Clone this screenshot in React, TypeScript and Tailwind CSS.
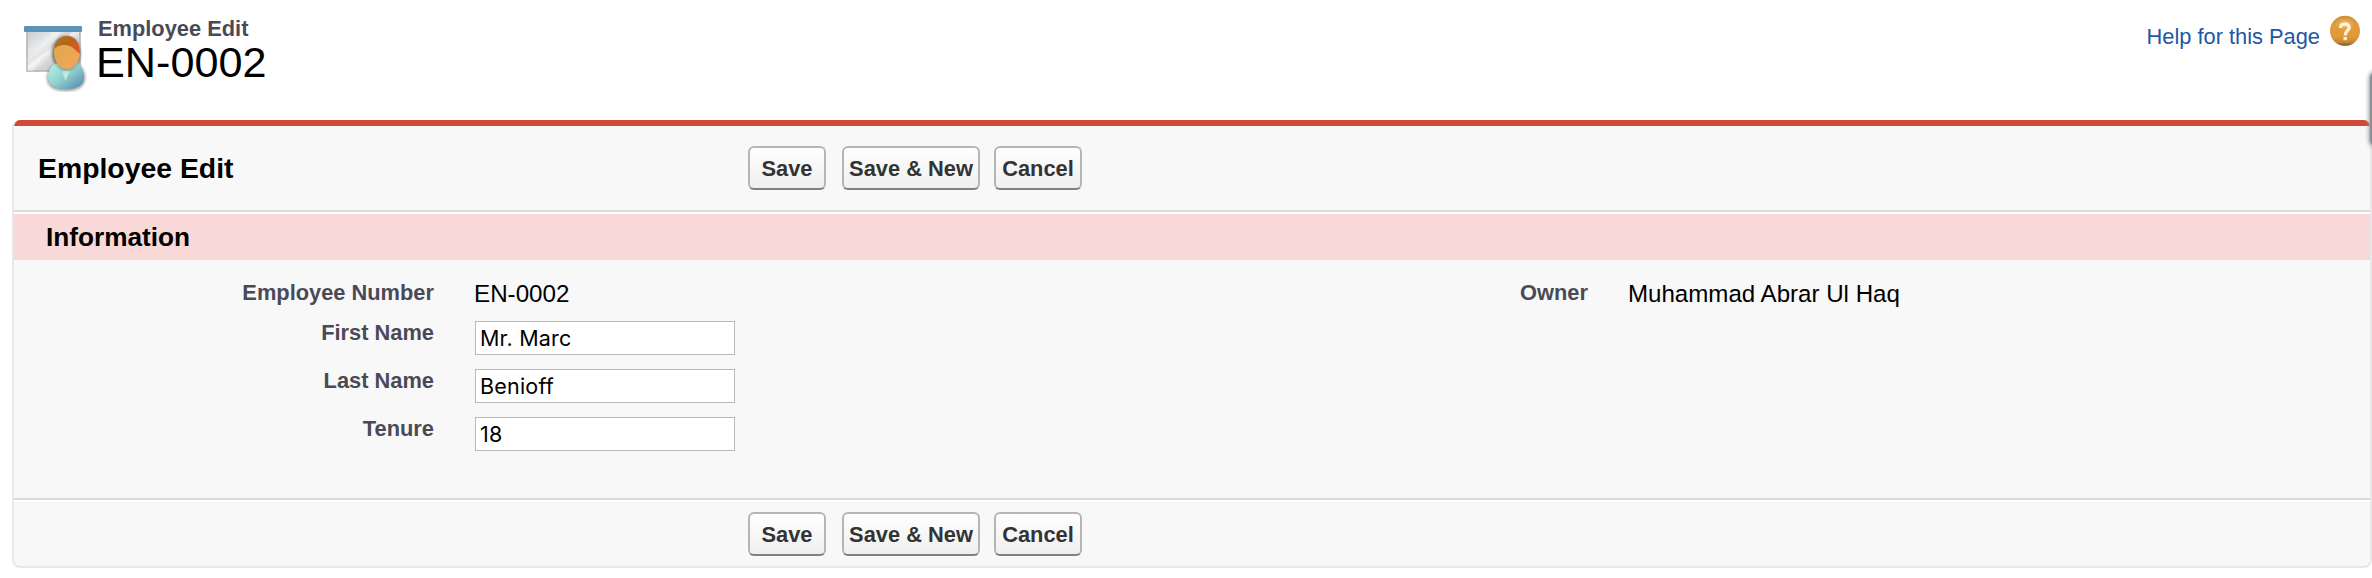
import type { ReactNode } from "react";

function EmployeeIcon() {
  return (
    <svg width="64" height="68" viewBox="0 0 64 68" className="mt-6 ml-[23px] shrink-0">
      <defs>
        <linearGradient id="board" x1="0" y1="0" x2="1" y2="1">
          <stop offset="0" stopColor="#c9cacc" />
          <stop offset="0.3" stopColor="#e9eaeb" />
          <stop offset="0.42" stopColor="#d3d4d6" />
          <stop offset="0.46" stopColor="#f0f0f1" />
          <stop offset="0.6" stopColor="#d2d3d5" />
          <stop offset="1" stopColor="#c4c5c7" />
        </linearGradient>
        <linearGradient id="shirt" x1="0" y1="0" x2="1" y2="1">
          <stop offset="0.1" stopColor="#b4f0e0" />
          <stop offset="0.5" stopColor="#8fcfce" />
          <stop offset="1" stopColor="#4f84ac" />
        </linearGradient>
        <linearGradient id="hair" x1="0" y1="0" x2="1" y2="0.7">
          <stop offset="0" stopColor="#b07a22" />
          <stop offset="0.5" stopColor="#b4651c" />
          <stop offset="1" stopColor="#de5422" />
        </linearGradient>
        <linearGradient id="face" x1="0" y1="0" x2="1" y2="1">
          <stop offset="0" stopColor="#e0a64a" />
          <stop offset="1" stopColor="#f0a75c" />
        </linearGradient>
        <filter id="soft" x="-20%" y="-20%" width="140%" height="140%">
          <feGaussianBlur stdDeviation="1.4" />
        </filter>
      </defs>
      <rect x="4" y="7" width="53" height="40" fill="url(#board)" stroke="#b4b5b7" strokeWidth="1.6" />
      <path d="M4.500 35 30 8H38L10 47H4.500Z" fill="#fff" opacity="0.35" />
      <rect x="1" y="2" width="58" height="6" rx="1" fill="#5c94b9" />
      <g filter="url(#soft)" opacity="0.5">
        <ellipse cx="43" cy="29" rx="14" ry="16.500" fill="#333" />
        <path d="M24 54C24 45 31 40 36 40H51C58 40 62 47 62 54C62 63 54 67 43 67S24 63 24 54Z" fill="#333" />
      </g>
      <path d="M25 53C25 45 30 40 35 39L52 38C58 39 61 46 61 54C61 61 54 65 43 65S25 61 25 53Z" fill="url(#shirt)" />
      <path d="M39 47 42.500 57 47 47Z" fill="#d4f1ef" opacity="0.7" />
      <ellipse cx="43.500" cy="29.500" rx="13.500" ry="17" fill="#46565a" opacity="0.45" filter="url(#soft)" />
      <ellipse cx="44" cy="28.500" rx="13" ry="16.500" fill="url(#face)" />
      <path d="M31.200 25C32 17 36.500 12 44 12S57 18 57 30C54 28 52 25 48 22.500C44 20.500 36 19.500 31.200 25Z" fill="url(#hair)" />
    </svg>
  );
}

function HelpIcon() {
  return (
    <svg width="30" height="32" viewBox="0 0 30 32" className="ml-[10px] mt-[15px] shrink-0">
      <defs>
        <linearGradient id="orb" x1="0" y1="0" x2="0" y2="1">
          <stop offset="0" stopColor="#cf8f35" />
          <stop offset="0.35" stopColor="#e19a3b" />
          <stop offset="0.7" stopColor="#e29a37" />
          <stop offset="0.88" stopColor="#c3873a" />
          <stop offset="1" stopColor="#7d5524" />
        </linearGradient>
        <radialGradient id="glow" cx="0.5" cy="0.5" r="0.5">
          <stop offset="0" stopColor="#f8d294" stopOpacity="0.9" />
          <stop offset="1" stopColor="#f0b860" stopOpacity="0" />
        </radialGradient>
      </defs>
      <ellipse cx="15" cy="16.500" rx="14" ry="14.500" fill="#6b4b22" opacity="0.35" />
      <circle cx="15" cy="15.800" r="15" fill="url(#orb)" />
      <ellipse cx="15" cy="9" rx="11" ry="7" fill="url(#glow)" />
      <path
        d="M10.500 13C10.500 10.500 12.200 9.200 15 9.200S19.200 10.800 19.200 12.800C19.200 15.800 15.200 15.500 15.200 20.500"
        fill="none"
        stroke="#fdf1de"
        strokeWidth="3.200"
      />
      <rect x="13.500" y="22" width="3.400" height="3.200" fill="#fdf1de" />
    </svg>
  );
}

function ActionButton({ className, children }: { className: string; children: ReactNode }) {
  return (
    <button
      type="button"
      className={`${className} h-11 shrink-0 whitespace-nowrap rounded-[6px] border-2 border-[#b5b5b5] border-b-[#7f7f7f] bg-linear-to-b from-white to-[#efefef] p-0 text-center text-[21.84px] leading-[40px] font-bold text-[#333333]`}
    >
      <span className="block pt-px leading-[40px]">{children}</span>
    </button>
  );
}

function Actions() {
  return (
    <div className="flex">
      <ActionButton className="w-[78px]">Save</ActionButton>
      <ActionButton className="ml-4 w-[138px]">Save &amp; New</ActionButton>
      <ActionButton className="ml-[14px] w-[88px]">Cancel</ActionButton>
    </div>
  );
}

function Label({ className, children }: { className: string; children: ReactNode }) {
  return (
    <div className={`${className} shrink-0 text-right text-[21.84px] leading-[26px] font-bold text-[#4a4a56]`}>
      {children}
    </div>
  );
}

function InputRow({ label, value }: { label: string; value: string }) {
  return (
    <div className="flex h-12">
      <Label className="w-[420px] pt-1">{label}</Label>
      <input
        defaultValue={value}
        className="mt-[5px] ml-[41px] h-[34px] w-[260px] border border-[#b9b9b9] bg-white px-1 py-0 font-['Inter',sans-serif] text-[21.5px] leading-[32px] tracking-[0.2px] text-black outline-none"
      />
    </div>
  );
}

export default function App() {
  return (
    <div className="relative h-[578px] w-[2372px] overflow-hidden bg-white font-['Liberation_Sans',Arial,sans-serif] text-black">
      <header className="flex h-[120px]">
        <EmployeeIcon />
        <div className="ml-[10px] pt-4">
          <p className="pl-px text-[21.84px] leading-[26px] font-bold text-[#4a4a56]">Employee Edit</p>
          <h1 className="mt-[-3px] -ml-px text-[43.2px] leading-[46px]">EN-0002</h1>
        </div>
        <div className="mr-3 ml-auto flex">
          <a href="#" className="pt-6 text-[21.84px] leading-[26px] text-[#1e57a4]">
            Help for this Page
          </a>
          <HelpIcon />
        </div>
      </header>

      <main className="ml-3 h-[448px] overflow-hidden rounded-lg border-x-2 border-b-2 border-[#e8e8e8] bg-[#f8f8f8]">
        <div className="h-[6px] bg-[#d14836]" />
        <div className="flex h-[86px] border-b-2 border-[#dbdbdb] pt-5">
          <h2 className="w-[734px] pl-6 text-[28.39px] leading-[44px] font-bold">Employee Edit</h2>
          <Actions />
        </div>
        <h3 className="h-12 border-t-2 border-white bg-[#f8d9d7] pl-8 text-[26.2px] leading-[46px] font-bold">
          Information
        </h3>
        <div className="h-[238px]">
          <div className="flex h-14">
            <Label className="w-[420px] pt-5">Employee Number</Label>
            <p className="w-[757px] pt-5 pl-10 text-[24.2px] leading-7">EN-0002</p>
            <Label className="w-[397px] pt-5">Owner</Label>
            <p className="pt-5 pl-10 text-[24.1px] leading-7">Muhammad Abrar Ul Haq</p>
          </div>
          <InputRow label="First Name" value="Mr. Marc" />
          <InputRow label="Last Name" value="Benioff" />
          <InputRow label="Tenure" value="18" />
        </div>
        <div className="border-t-2 border-[#dbdbdb]">
          <div className="border-t-2 border-white pt-[10px] pl-[734px]">
            <Actions />
          </div>
        </div>
      </main>

      <div className="absolute top-[72px] left-[2370px] h-[74px] w-5 rounded-md bg-[#8b9094] shadow-[0_0_4px_1px_#8b9094]" />
    </div>
  );
}
